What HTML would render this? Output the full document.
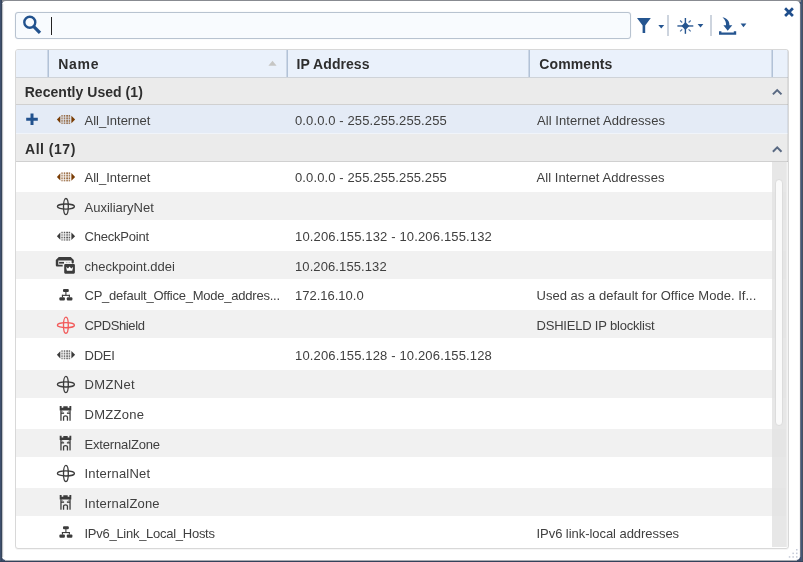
<!DOCTYPE html>
<html>
<head>
<meta charset="utf-8">
<title>Object picker</title>
<style>
html,body{margin:0;padding:0;}
body{width:803px;height:562px;overflow:hidden;background:#3f4f6e;font-family:"Liberation Sans",sans-serif;position:relative;color:#333;}
.abs{position:absolute;}
#root{position:absolute;left:0;top:0;width:803px;height:562px;will-change:transform;}
#topband{left:2px;top:0;width:799px;height:2px;background:#888b91;}
#rightband{left:801px;top:0;width:2px;height:562px;background:linear-gradient(to right,#44577a 50%,#47505f 50%);}
#leftband{left:0;top:0;width:2px;height:562px;background:linear-gradient(to right,#3f506e 50%,#36455b 50%);}
#lshade{left:2px;top:4px;width:2px;height:553px;background:linear-gradient(to right,#bdbfc4 50%,#f4f4f5 50%);}
#rshade{left:799px;top:4px;width:2px;height:553px;background:linear-gradient(to right,#f4f4f5 50%,#6d7482 50%);}
#bshade{left:5px;top:560px;width:792px;height:1px;background:#a9abb1;}
#bband{left:0;top:561px;width:803px;height:1px;background:#34425b;}
#panel{left:2px;top:1px;width:798px;height:559px;background:#fff;border-radius:4px;}
#search{margin:0;padding:0 0 0 36px;box-sizing:content-box;outline:none;font:13px "Liberation Sans",sans-serif;left:15px;top:12px;width:578px;height:25px;border:1px solid #b8c3d0;box-shadow:0 0 1px rgba(170,182,198,.5);border-radius:3px;background:#f8fbfe;}
#cursor{left:51px;top:17px;width:1px;height:18px;background:#222;}
.sep{width:1.6px;height:21px;top:15px;background:#cdd4de;}
#table{left:15px;top:49px;width:772px;height:498px;border:1px solid #d8d8d8;border-radius:3px;background:#fff;box-shadow:0 1px 0 #f6f6f6;}
#thead{left:16px;top:50px;width:772px;height:27px;background:#eaf1fb;border-bottom:1px solid #cfd3d8;border-radius:2px 2px 0 0;}
.colsep{top:50px;width:2px;height:27px;background:linear-gradient(to right,#ccd7e6 50%,#b2c2d7 50%);}
.th{height:30px;line-height:30px;font-size:14px;font-weight:700;color:#2e2e2e;white-space:nowrap;}
.group{left:16px;width:772px;background:#ebebeb;border-bottom:1px solid #d0d0d0;}
.alt{left:16px;width:770px;height:28.1px;background:#f1f1f1;}
.sel{left:16px;top:104.5px;width:772px;height:28.6px;background:#e4ebf6;border-bottom:1px solid #f0f4fa;}
.c{height:30px;line-height:30px;font-size:13px;color:#404040;white-space:nowrap;}
#track{left:772px;top:162px;width:14px;height:385px;background:rgba(227,227,227,.86);}
#trackedge{left:786px;top:162px;width:2px;height:385px;background:linear-gradient(to right,#ececec 50%,#f3f3f3 50%);}
#edge2{left:787px;top:50px;width:1px;height:112px;background:rgba(110,110,110,.13);}
#thumb{left:775px;top:179px;width:8px;height:247px;background:#fafafa;border:1px solid #dcdcdc;border-radius:4px;box-sizing:border-box;}
</style>
</head>
<body>
<div id="root">
<div id="topband" class="abs"></div>
<div id="panel" class="abs"></div>
<div id="rightband" class="abs"></div>
<div id="leftband" class="abs"></div>
<div id="lshade" class="abs"></div>
<div id="rshade" class="abs"></div>
<div id="bshade" class="abs"></div>
<div id="bband" class="abs"></div>

<!-- search box -->
<input id="search" class="abs" type="text" value="" aria-label="Search">
<svg class="abs" style="left:20px;top:13px" width="24" height="24" viewBox="0 0 24 24">
  <circle cx="9.8" cy="9.3" r="5.5" fill="none" stroke="#22528e" stroke-width="2.4"/>
  <path d="M13.8 13.6 L20 19.8" stroke="#22528e" stroke-width="3.3" fill="none"/>
</svg>
<div id="cursor" class="abs"></div>

<!-- toolbar icons -->
<svg class="abs" style="left:632px;top:10px" width="125" height="30" viewBox="0 0 125 30">
  <g fill="#255590">
    <path d="M5 8 H18.8 L13.2 15.5 V23 H10.6 V15.5 Z"/>
    <path d="M26.3 15 H32.2 L29.25 18.6 Z"/>
    <rect x="45.4" y="15.1" width="15.9" height="1.7" opacity=".8"/>
    <rect x="52.7" y="8" width="1.4" height="15.8"/>
    <path d="M53.4 12 L57.35 15.95 L53.4 19.9 L49.45 15.95 Z"/>
    <path d="M48.1 10.5 L50.2 12.5 M58.7 10.5 L56.6 12.5 M48.1 21.4 L50.2 19.4 M58.7 21.4 L56.6 19.4" stroke="#255590" stroke-width="1.1" fill="none" opacity=".85"/>
    <path d="M65.6 14 H71.4 L68.5 17.6 Z"/>
    <path d="M90.5 7.2 C96 8.6 97.6 11.5 97.4 15.3 H100.3 L95.7 20.8 L91.4 15.3 H94 C94.2 12.4 93.4 10 90.5 7.2 Z"/>
    <path d="M87 21.2 H89.4 V22.5 H101.8 V21.2 H104.2 V24.8 H87 Z"/>
    <path d="M108.6 13.6 H114.4 L111.5 17.3 Z"/>
  </g>
</svg>
<div class="abs sep" style="left:667.2px"></div>
<div class="abs sep" style="left:710.3px"></div>

<!-- close -->
<svg class="abs" style="left:782px;top:5px" width="14" height="14" viewBox="0 0 14 14">
  <path d="M3.1 3.2 L10.9 11 M10.9 3.2 L3.1 11" stroke="#1f4e8c" stroke-width="2.7" fill="none"/>
</svg>

<!-- table -->
<div id="table" class="abs"></div>
<div id="thead" class="abs"></div>
<div class="abs colsep" style="left:47px"></div>
<div class="abs colsep" style="left:286px"></div>
<div class="abs colsep" style="left:528px"></div>
<div class="abs colsep" style="left:771px"></div>
<div class="abs th" style="left:58.2px;top:48.90px;letter-spacing:0.7px">Name</div><div class="abs th" style="left:296.6px;top:48.90px;letter-spacing:0.06px">IP Address</div><div class="abs th" style="left:539.3px;top:48.90px;letter-spacing:0.1px">Comments</div><svg class="abs" style="left:266px;top:58px" width="13" height="11" viewBox="0 0 13 11"><g transform="translate(0.5 0)"><path d="M1.9 7.7 L6 2.7 L10.1 7.7 Z" fill="#c6c6c4"/></g></svg><div class="abs group" style="top:78px;height:26px"></div><div class="abs th" style="left:24.7px;top:76.50px;letter-spacing:0.04px">Recently Used (1)</div><svg class="abs" style="left:770px;top:86px" width="15" height="13" viewBox="0 0 15 13"><g transform="translate(0 0.3)"><path d="M2.9 8.1 L7.2 3.8 L11.5 8.1" stroke="#5a6a83" stroke-width="2.05" fill="none"/></g></svg><div class="abs sel"></div><svg class="abs" style="left:25px;top:112px" width="15" height="15" viewBox="0 0 15 15"><g transform="translate(0 0.2)"><path d="M7 1.2 V12.8 M1.2 7 H12.8" stroke="#22528e" stroke-width="3" fill="none"/></g></svg><svg class="abs" style="left:55px;top:112px" width="22" height="15" viewBox="0 0 22 15"><g transform="translate(0 0.55)"><g fill="#7a3d05"><path d="M1.9 7 L5.3 3.4 V10.6 Z"/><path d="M20.1 7 L16.4 3.2 V10.8 Z"/><rect x="6.3" y="2.5" width="9.2" height="9" opacity=".1"/><rect x="6.5" y="2.5" width="1.0" height="9" opacity=".22"/><rect x="9.0" y="2.5" width="1.0" height="9" opacity=".22"/><rect x="11.3" y="2.5" width="1.8" height="9" opacity=".22"/><rect x="14.0" y="2.5" width="1.0" height="9" opacity=".22"/><rect x="6.3" y="2.7" width="9.2" height="1.1" opacity=".12"/><rect x="6.3" y="5.2" width="9.2" height="1.1" opacity=".12"/><rect x="6.3" y="7.8" width="9.2" height="1.1" opacity=".12"/><rect x="6.3" y="10.2" width="9.2" height="1.1" opacity=".12"/><rect x="6.5" y="2.7" width="1.0" height="1.1" opacity="0.75"/><rect x="9.0" y="2.7" width="1.0" height="1.1" opacity="0.75"/><rect x="11.3" y="2.7" width="1.8" height="1.1" opacity="0.75"/><rect x="14.0" y="2.7" width="1.0" height="1.1" opacity="0.75"/><rect x="6.5" y="5.2" width="1.0" height="1.1" opacity="0.45"/><rect x="9.0" y="5.2" width="1.0" height="1.1" opacity="0.45"/><rect x="11.3" y="5.2" width="1.8" height="1.1" opacity="0.45"/><rect x="14.0" y="5.2" width="1.0" height="1.1" opacity="0.45"/><rect x="6.5" y="7.8" width="1.0" height="1.1" opacity="0.75"/><rect x="9.0" y="7.8" width="1.0" height="1.1" opacity="0.75"/><rect x="11.3" y="7.8" width="1.8" height="1.1" opacity="0.75"/><rect x="14.0" y="7.8" width="1.0" height="1.1" opacity="0.75"/><rect x="6.5" y="10.2" width="1.0" height="1.1" opacity="0.45"/><rect x="9.0" y="10.2" width="1.0" height="1.1" opacity="0.45"/><rect x="11.3" y="10.2" width="1.8" height="1.1" opacity="0.45"/><rect x="14.0" y="10.2" width="1.0" height="1.1" opacity="0.45"/></g></g></svg><div class="abs c" style="left:84.5px;top:106px">All_Internet</div><div class="abs c" style="left:295px;top:106px;letter-spacing:0.12px">0.0.0.0 - 255.255.255.255</div><div class="abs c" style="left:537px;top:106px;letter-spacing:0.07px">All Internet Addresses</div><div class="abs group" style="top:134px;height:27px"></div><div class="abs th" style="left:25px;top:134.20px;letter-spacing:0.52px">All (17)</div><svg class="abs" style="left:770px;top:143px" width="15" height="13" viewBox="0 0 15 13"><g transform="translate(0 0.6)"><path d="M2.9 8.1 L7.2 3.8 L11.5 8.1" stroke="#5a6a83" stroke-width="2.05" fill="none"/></g></svg>
<svg class="abs" style="left:55px;top:169px" width="22" height="15" viewBox="0 0 22 15"><g transform="translate(0 0.9)"><g fill="#7a3d05"><path d="M1.9 7 L5.3 3.4 V10.6 Z"/><path d="M20.1 7 L16.4 3.2 V10.8 Z"/><rect x="6.3" y="2.5" width="9.2" height="9" opacity=".1"/><rect x="6.5" y="2.5" width="1.0" height="9" opacity=".22"/><rect x="9.0" y="2.5" width="1.0" height="9" opacity=".22"/><rect x="11.3" y="2.5" width="1.8" height="9" opacity=".22"/><rect x="14.0" y="2.5" width="1.0" height="9" opacity=".22"/><rect x="6.3" y="2.7" width="9.2" height="1.1" opacity=".12"/><rect x="6.3" y="5.2" width="9.2" height="1.1" opacity=".12"/><rect x="6.3" y="7.8" width="9.2" height="1.1" opacity=".12"/><rect x="6.3" y="10.2" width="9.2" height="1.1" opacity=".12"/><rect x="6.5" y="2.7" width="1.0" height="1.1" opacity="0.75"/><rect x="9.0" y="2.7" width="1.0" height="1.1" opacity="0.75"/><rect x="11.3" y="2.7" width="1.8" height="1.1" opacity="0.75"/><rect x="14.0" y="2.7" width="1.0" height="1.1" opacity="0.75"/><rect x="6.5" y="5.2" width="1.0" height="1.1" opacity="0.45"/><rect x="9.0" y="5.2" width="1.0" height="1.1" opacity="0.45"/><rect x="11.3" y="5.2" width="1.8" height="1.1" opacity="0.45"/><rect x="14.0" y="5.2" width="1.0" height="1.1" opacity="0.45"/><rect x="6.5" y="7.8" width="1.0" height="1.1" opacity="0.75"/><rect x="9.0" y="7.8" width="1.0" height="1.1" opacity="0.75"/><rect x="11.3" y="7.8" width="1.8" height="1.1" opacity="0.75"/><rect x="14.0" y="7.8" width="1.0" height="1.1" opacity="0.75"/><rect x="6.5" y="10.2" width="1.0" height="1.1" opacity="0.45"/><rect x="9.0" y="10.2" width="1.0" height="1.1" opacity="0.45"/><rect x="11.3" y="10.2" width="1.8" height="1.1" opacity="0.45"/><rect x="14.0" y="10.2" width="1.0" height="1.1" opacity="0.45"/></g></g></svg><div class="abs c" style="left:84.5px;top:163px">All_Internet</div><div class="abs c" style="left:295px;top:163px;letter-spacing:0.12px">0.0.0.0 - 255.255.255.255</div><div class="abs c" style="left:536.5px;top:163px;letter-spacing:0.07px">All Internet Addresses</div>
<div class="abs alt" style="top:191.80px"></div><svg class="abs" style="left:54px;top:195px" width="23" height="23" viewBox="0 0 23 23"><g transform="translate(0.9 0.55)"><g fill="none" stroke="#3c3c3c" stroke-width="1.35"><ellipse cx="11" cy="11" rx="8.5" ry="2.55"/><ellipse cx="11" cy="11" rx="2.4" ry="8.1"/></g></g></svg><div class="abs c" style="left:84.5px;top:193px">AuxiliaryNet</div>
<svg class="abs" style="left:55px;top:229px" width="22" height="15" viewBox="0 0 22 15"><g transform="translate(0 0.2)"><g fill="#3c3c3c"><path d="M1.9 7 L5.3 3.4 V10.6 Z"/><path d="M20.1 7 L16.4 3.2 V10.8 Z"/><rect x="6.3" y="2.5" width="9.2" height="9" opacity=".1"/><rect x="6.5" y="2.5" width="1.0" height="9" opacity=".22"/><rect x="9.0" y="2.5" width="1.0" height="9" opacity=".22"/><rect x="11.3" y="2.5" width="1.8" height="9" opacity=".22"/><rect x="14.0" y="2.5" width="1.0" height="9" opacity=".22"/><rect x="6.3" y="2.7" width="9.2" height="1.1" opacity=".12"/><rect x="6.3" y="5.2" width="9.2" height="1.1" opacity=".12"/><rect x="6.3" y="7.8" width="9.2" height="1.1" opacity=".12"/><rect x="6.3" y="10.2" width="9.2" height="1.1" opacity=".12"/><rect x="6.5" y="2.7" width="1.0" height="1.1" opacity="0.75"/><rect x="9.0" y="2.7" width="1.0" height="1.1" opacity="0.75"/><rect x="11.3" y="2.7" width="1.8" height="1.1" opacity="0.75"/><rect x="14.0" y="2.7" width="1.0" height="1.1" opacity="0.75"/><rect x="6.5" y="5.2" width="1.0" height="1.1" opacity="0.45"/><rect x="9.0" y="5.2" width="1.0" height="1.1" opacity="0.45"/><rect x="11.3" y="5.2" width="1.8" height="1.1" opacity="0.45"/><rect x="14.0" y="5.2" width="1.0" height="1.1" opacity="0.45"/><rect x="6.5" y="7.8" width="1.0" height="1.1" opacity="0.75"/><rect x="9.0" y="7.8" width="1.0" height="1.1" opacity="0.75"/><rect x="11.3" y="7.8" width="1.8" height="1.1" opacity="0.75"/><rect x="14.0" y="7.8" width="1.0" height="1.1" opacity="0.75"/><rect x="6.5" y="10.2" width="1.0" height="1.1" opacity="0.45"/><rect x="9.0" y="10.2" width="1.0" height="1.1" opacity="0.45"/><rect x="11.3" y="10.2" width="1.8" height="1.1" opacity="0.45"/><rect x="14.0" y="10.2" width="1.0" height="1.1" opacity="0.45"/></g></g></svg><div class="abs c" style="left:84.5px;top:222px;letter-spacing:-0.22px">CheckPoint</div><div class="abs c" style="left:295px;top:222px;letter-spacing:0.15px">10.206.155.132 - 10.206.155.132</div>
<div class="abs alt" style="top:251.10px"></div><svg class="abs" style="left:54px;top:254px" width="23" height="23" viewBox="0 0 23 23"><g transform="translate(0 0.0)"><path d="M4.8 3 H16.8 L19.8 6 V8.6 Q19.8 9.4 19 9.4 H18.4 Q17.6 9.4 17.6 8.6 V6.6 H4.3 V10.7 H8.7 V12.4 H3 Q1.8 12.4 1.8 11.2 V6 Z" fill="#3c3c3c"/><rect x="5.1" y="7.9" width="4.9" height="1.7" fill="#3c3c3c"/><rect x="12.3" y="8.1" width="1" height="1" fill="#3c3c3c" opacity=".45"/><rect x="14.7" y="8.1" width="1" height="1" fill="#3c3c3c" opacity=".45"/><rect x="10.2" y="10" width="10.7" height="9.7" rx="1.1" fill="#3c3c3c"/><path d="M12.1 12.9 L14 14.6 L15.6 12.5 L17.2 14.6 L19.1 12.9 L18.3 16.7 H12.9 Z" fill="#fff"/></g></svg><div class="abs c" style="left:84.5px;top:252px">checkpoint.ddei</div><div class="abs c" style="left:295px;top:252px;letter-spacing:0.1px">10.206.155.132</div>
<svg class="abs" style="left:54px;top:283px" width="23" height="23" viewBox="0 0 23 23"><g transform="translate(0.9 0.8)"><g fill="#3c3c3c"><rect x="8.1" y="5.2" width="5.8" height="3.1" rx="1"/><rect x="10.45" y="8" width="1.1" height="3.6"/><rect x="7" y="11" width="8" height="1.1"/><rect x="7" y="11" width="1.1" height="2.6"/><rect x="13.9" y="11" width="1.1" height="2.6"/><rect x="4.5" y="13.5" width="5.5" height="3.2" rx="1"/><rect x="11.9" y="13.5" width="5.6" height="3.2" rx="1"/></g></g></svg><div class="abs c" style="left:84.5px;top:281px;letter-spacing:-0.235px">CP_default_Office_Mode_addres...</div><div class="abs c" style="left:295px;top:281px">172.16.10.0</div><div class="abs c" style="left:536.5px;top:281px;letter-spacing:0.03px">Used as a default for Office Mode. If...</div>
<div class="abs alt" style="top:310.40px"></div><svg class="abs" style="left:54px;top:314px" width="23" height="23" viewBox="0 0 23 23"><g transform="translate(0.9 0.15)"><g fill="none" stroke="#f25a5a" stroke-width="1.35"><ellipse cx="11" cy="11" rx="8.5" ry="2.55"/><ellipse cx="11" cy="11" rx="2.4" ry="8.1"/></g></g></svg><div class="abs c" style="left:84.5px;top:311px;letter-spacing:-0.4px">CPDShield</div><div class="abs c" style="left:536.5px;top:311px;letter-spacing:-0.2px">DSHIELD IP blocklist</div>
<svg class="abs" style="left:55px;top:347px" width="22" height="15" viewBox="0 0 22 15"><g transform="translate(0 0.8)"><g fill="#3c3c3c"><path d="M1.9 7 L5.3 3.4 V10.6 Z"/><path d="M20.1 7 L16.4 3.2 V10.8 Z"/><rect x="6.3" y="2.5" width="9.2" height="9" opacity=".1"/><rect x="6.5" y="2.5" width="1.0" height="9" opacity=".22"/><rect x="9.0" y="2.5" width="1.0" height="9" opacity=".22"/><rect x="11.3" y="2.5" width="1.8" height="9" opacity=".22"/><rect x="14.0" y="2.5" width="1.0" height="9" opacity=".22"/><rect x="6.3" y="2.7" width="9.2" height="1.1" opacity=".12"/><rect x="6.3" y="5.2" width="9.2" height="1.1" opacity=".12"/><rect x="6.3" y="7.8" width="9.2" height="1.1" opacity=".12"/><rect x="6.3" y="10.2" width="9.2" height="1.1" opacity=".12"/><rect x="6.5" y="2.7" width="1.0" height="1.1" opacity="0.75"/><rect x="9.0" y="2.7" width="1.0" height="1.1" opacity="0.75"/><rect x="11.3" y="2.7" width="1.8" height="1.1" opacity="0.75"/><rect x="14.0" y="2.7" width="1.0" height="1.1" opacity="0.75"/><rect x="6.5" y="5.2" width="1.0" height="1.1" opacity="0.45"/><rect x="9.0" y="5.2" width="1.0" height="1.1" opacity="0.45"/><rect x="11.3" y="5.2" width="1.8" height="1.1" opacity="0.45"/><rect x="14.0" y="5.2" width="1.0" height="1.1" opacity="0.45"/><rect x="6.5" y="7.8" width="1.0" height="1.1" opacity="0.75"/><rect x="9.0" y="7.8" width="1.0" height="1.1" opacity="0.75"/><rect x="11.3" y="7.8" width="1.8" height="1.1" opacity="0.75"/><rect x="14.0" y="7.8" width="1.0" height="1.1" opacity="0.75"/><rect x="6.5" y="10.2" width="1.0" height="1.1" opacity="0.45"/><rect x="9.0" y="10.2" width="1.0" height="1.1" opacity="0.45"/><rect x="11.3" y="10.2" width="1.8" height="1.1" opacity="0.45"/><rect x="14.0" y="10.2" width="1.0" height="1.1" opacity="0.45"/></g></g></svg><div class="abs c" style="left:84.5px;top:341px;letter-spacing:-0.22px">DDEI</div><div class="abs c" style="left:295px;top:341px;letter-spacing:0.15px">10.206.155.128 - 10.206.155.128</div>
<div class="abs alt" style="top:369.70px"></div><svg class="abs" style="left:54px;top:373px" width="23" height="23" viewBox="0 0 23 23"><g transform="translate(0.9 0.45)"><g fill="none" stroke="#3c3c3c" stroke-width="1.35"><ellipse cx="11" cy="11" rx="8.5" ry="2.55"/><ellipse cx="11" cy="11" rx="2.4" ry="8.1"/></g></g></svg><div class="abs c" style="left:84.5px;top:370px;letter-spacing:0.35px">DMZNet</div>
<svg class="abs" style="left:54px;top:402px" width="23" height="23" viewBox="0 0 23 23"><g transform="translate(0.4 0.25)"><g fill="#3c3c3c"><path d="M5.3 3.8 H7.2 V5.5 H8.9 V4.1 H13.3 V5.5 H15 V3.8 H16.9 V8.2 H5.3 Z"/><rect x="5.8" y="8" width="1.5" height="10.5" opacity=".85"/><rect x="14.9" y="8" width="1.5" height="10.5" opacity=".85"/><rect x="6.6" y="10.3" width="3.1" height="1.3"/><rect x="12.5" y="10.3" width="3.1" height="1.3"/><path d="M7.3 8.2 L9.6 10.3 H8.4 L7.3 9.3 Z M14.9 8.2 L12.6 10.3 H13.8 L14.9 9.3 Z" opacity=".55"/><path d="M8.5 18.5 V14.9 Q8.5 13 11.1 13 Q13.7 13 13.7 14.9 V18.5 H12.4 V15.1 Q12.4 14.3 11.1 14.3 Q9.8 14.3 9.8 15.1 V18.5 Z"/></g></g></svg><div class="abs c" style="left:84.5px;top:400px;letter-spacing:0.28px">DMZZone</div>
<div class="abs alt" style="top:429.00px"></div><svg class="abs" style="left:54px;top:431px" width="23" height="23" viewBox="0 0 23 23"><g transform="translate(0.4 0.9)"><g fill="#3c3c3c"><path d="M5.3 3.8 H7.2 V5.5 H8.9 V4.1 H13.3 V5.5 H15 V3.8 H16.9 V8.2 H5.3 Z"/><rect x="5.8" y="8" width="1.5" height="10.5" opacity=".85"/><rect x="14.9" y="8" width="1.5" height="10.5" opacity=".85"/><rect x="6.6" y="10.3" width="3.1" height="1.3"/><rect x="12.5" y="10.3" width="3.1" height="1.3"/><path d="M7.3 8.2 L9.6 10.3 H8.4 L7.3 9.3 Z M14.9 8.2 L12.6 10.3 H13.8 L14.9 9.3 Z" opacity=".55"/><path d="M8.5 18.5 V14.9 Q8.5 13 11.1 13 Q13.7 13 13.7 14.9 V18.5 H12.4 V15.1 Q12.4 14.3 11.1 14.3 Q9.8 14.3 9.8 15.1 V18.5 Z"/></g></g></svg><div class="abs c" style="left:84.5px;top:430px;letter-spacing:-0.16px">ExternalZone</div>
<svg class="abs" style="left:54px;top:462px" width="23" height="23" viewBox="0 0 23 23"><g transform="translate(0.9 0.4)"><g fill="none" stroke="#3c3c3c" stroke-width="1.35"><ellipse cx="11" cy="11" rx="8.5" ry="2.55"/><ellipse cx="11" cy="11" rx="2.4" ry="8.1"/></g></g></svg><div class="abs c" style="left:84.5px;top:459px;letter-spacing:0.2px">InternalNet</div>
<div class="abs alt" style="top:488.30px"></div><svg class="abs" style="left:54px;top:491px" width="23" height="23" viewBox="0 0 23 23"><g transform="translate(0.4 0.2)"><g fill="#3c3c3c"><path d="M5.3 3.8 H7.2 V5.5 H8.9 V4.1 H13.3 V5.5 H15 V3.8 H16.9 V8.2 H5.3 Z"/><rect x="5.8" y="8" width="1.5" height="10.5" opacity=".85"/><rect x="14.9" y="8" width="1.5" height="10.5" opacity=".85"/><rect x="6.6" y="10.3" width="3.1" height="1.3"/><rect x="12.5" y="10.3" width="3.1" height="1.3"/><path d="M7.3 8.2 L9.6 10.3 H8.4 L7.3 9.3 Z M14.9 8.2 L12.6 10.3 H13.8 L14.9 9.3 Z" opacity=".55"/><path d="M8.5 18.5 V14.9 Q8.5 13 11.1 13 Q13.7 13 13.7 14.9 V18.5 H12.4 V15.1 Q12.4 14.3 11.1 14.3 Q9.8 14.3 9.8 15.1 V18.5 Z"/></g></g></svg><div class="abs c" style="left:84.5px;top:489px;letter-spacing:0.19px">InternalZone</div>
<svg class="abs" style="left:54px;top:521px" width="23" height="23" viewBox="0 0 23 23"><g transform="translate(0.9 0.0)"><g fill="#3c3c3c"><rect x="8.1" y="5.2" width="5.8" height="3.1" rx="1"/><rect x="10.45" y="8" width="1.1" height="3.6"/><rect x="7" y="11" width="8" height="1.1"/><rect x="7" y="11" width="1.1" height="2.6"/><rect x="13.9" y="11" width="1.1" height="2.6"/><rect x="4.5" y="13.5" width="5.5" height="3.2" rx="1"/><rect x="11.9" y="13.5" width="5.6" height="3.2" rx="1"/></g></g></svg><div class="abs c" style="left:84.5px;top:519px;letter-spacing:-0.27px">IPv6_Link_Local_Hosts</div><div class="abs c" style="left:536.5px;top:519px;letter-spacing:-0.05px">IPv6 link-local addresses</div>
<div id="track" class="abs"></div>
<div id="trackedge" class="abs"></div>
<div id="edge2" class="abs"></div>
<div id="thumb" class="abs"></div>

<!-- resize grip -->
<svg class="abs" style="left:787px;top:547px" width="12" height="12" viewBox="0 0 12 12">
  <g fill="#c4c9d6"><rect x="9" y="2" width="1.5" height="1.5"/><rect x="5.4" y="5.6" width="1.5" height="1.5"/><rect x="9" y="5.6" width="1.5" height="1.5"/><rect x="1.8" y="9.2" width="1.5" height="1.5"/><rect x="5.4" y="9.2" width="1.5" height="1.5"/><rect x="9" y="9.2" width="1.5" height="1.5"/></g>
</svg>
</div>
</body>
</html>
